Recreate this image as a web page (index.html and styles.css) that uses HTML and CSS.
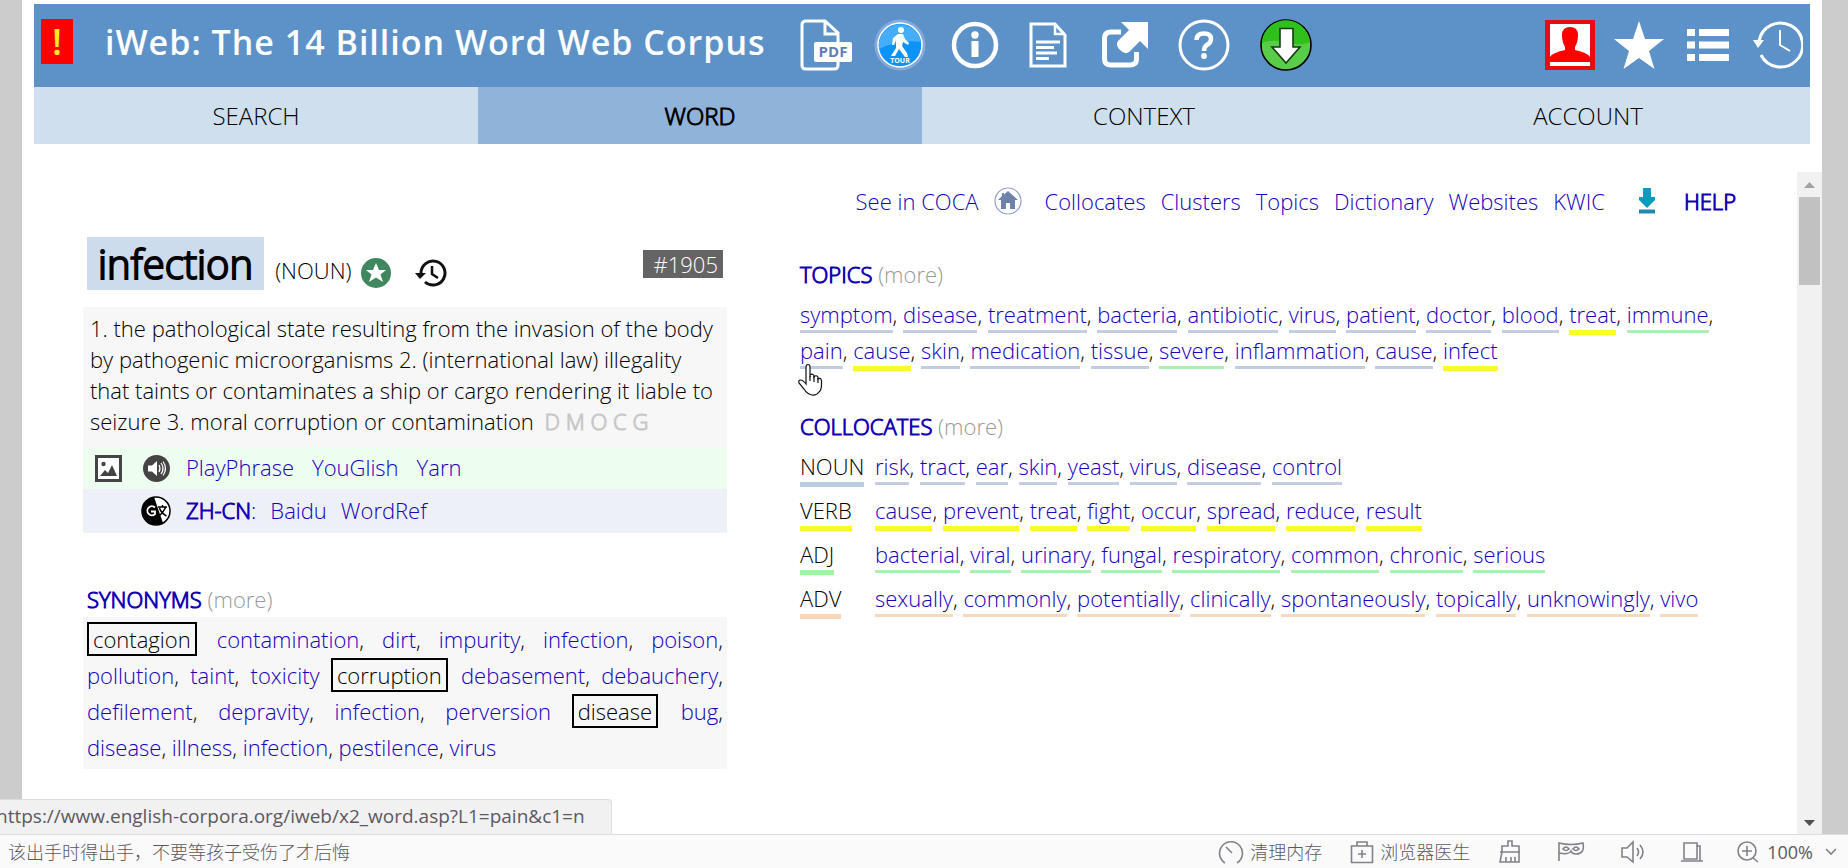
FILE: index.html
```html
<!DOCTYPE html>
<html lang="en">
<head>
<meta charset="utf-8">
<title>iWeb: The 14 Billion Word Web Corpus</title>
<link rel="stylesheet" href="styles.css">
</head>
<body>
<div class="page">
  <header class="banner">
    <a class="alert" href="#">!</a>
    <h1 class="title">iWeb: The 14 Billion Word Web Corpus</h1>
    <div class="tools">
      <a class="pdf" href="#" aria-label="PDF"><svg width="52" height="52" viewBox="0 0 52 52"><path d="M38 23V14L25 2H6Q2 2 2 6V46Q2 50 6 50H34Q38 50 38 46V43M25 2V15H38" fill="none" stroke="#fff" stroke-width="3"/><rect x="14" y="23" width="38" height="20" rx="2" fill="#fff"/><text x="33" y="38" text-anchor="middle" class="pdf-text">PDF</text></svg></a>
      <a class="tour" href="#" aria-label="Tour"><svg width="52" height="52" viewBox="0 0 52 52"><circle cx="26" cy="26" r="25.500" fill="#85aadc"/><circle cx="26" cy="26" r="22" fill="#0d92f8" stroke="#fff" stroke-width="1.500"/><path d="M5 30A21 21 0 0 1 47 23Q26 20 5 30Z" fill="#45adfa"/><circle cx="27" cy="11" r="3" fill="#fff"/><path d="M24 15L29 15L31 20L35 24L34 26L29 23L28 27L33 34L34 38H31L25 30L21 37H17L22 29L22 21L20 26H18L19 19Z" fill="#fff"/><text x="26" y="44" text-anchor="middle" class="tour-text">TOUR</text></svg></a>
      <a href="#" aria-label="Information"><svg width="48" height="48" viewBox="0 0 48 48"><circle cx="24" cy="24" r="21" fill="none" stroke="#fff" stroke-width="4.500"/><circle cx="24" cy="14" r="3.700" fill="#fff"/><rect x="20.500" y="20" width="7" height="16" fill="#fff"/></svg></a>
      <a class="doc" href="#" aria-label="Overview"><svg width="38" height="46" viewBox="0 0 38 46"><path d="M2 2H26L36 13V44H2Z" fill="none" stroke="#fff" stroke-width="3"/><path d="M26 2V12H36" fill="none" stroke="#fff" stroke-width="2.500"/><path d="M7 20H31M7 25.500H25M7 31H28M7 36.500H20" stroke="#fff" stroke-width="3"/></svg></a>
      <a href="#" aria-label="Open in new window"><svg width="46" height="46" viewBox="0 0 46 46"><path d="M19 10H9Q2.500 10 2.500 16V37Q2.500 43 9 43H28Q34.500 43 34.500 37V30" fill="none" stroke="#fff" stroke-width="5"/><path d="M19 0H46V27L38 19L27 30Q23 33 18 28Q13 23 16 19L27 8Z" fill="#fff"/></svg></a>
      <a href="#" aria-label="Help"><svg width="52" height="52" viewBox="0 0 52 52"><circle cx="26" cy="26" r="24" fill="none" stroke="#fff" stroke-width="3"/><path d="M18.500 21Q18.500 14.500 26 14.500Q33 14.500 33 20Q33 23.500 29.500 25.500Q26 27.500 26 32" fill="none" stroke="#fff" stroke-width="4.500"/><circle cx="26" cy="37" r="2.900" fill="#fff"/></svg></a>
      <a href="#" aria-label="Download"><svg width="52" height="52" viewBox="0 0 52 52"><circle cx="26" cy="26" r="25" fill="#59cc4a" stroke="#000" stroke-width="1.600"/><path d="M2 22A24.200 24.200 0 0 1 50 23Q38 28 24 23Q12 20 2 24Z" fill="#2fc01c"/><path d="M20 9.500H33V28H40L26 44L12 28H20Z" fill="#fff" stroke="#123c0e" stroke-width="1.600"/></svg></a>
    </div>
    <div class="user-tools">
      <a class="profile" href="#" aria-label="Profile"><svg width="50" height="50" viewBox="0 0 50 50"><rect width="50" height="50" fill="#e60c16"/><rect x="5" y="4" width="40" height="42" fill="#fff"/><path d="M5 42V37Q7 33 20 30V27Q17 22 17 15Q17 7 25 7Q33 7 33 15Q33 22 30 27V30Q43 33 45 37V42Z" fill="#f00"/></svg></a>
      <a href="#" aria-label="Favorites"><svg width="52" height="50" viewBox="0 0 52 50"><path d="M26 1L32 19H51L36 31L41.500 49L26 38L10.500 49L16 31L1 19H20Z" fill="#fff"/></svg></a>
      <a class="lists" href="#" aria-label="Lists"><svg width="42" height="34" viewBox="0 0 42 34"><path d="M0 1H8V8H0ZM12 1H42V8H12ZM0 13.500H8V20.500H0ZM12 13.500H42V20.500H12ZM0 26H8V33H0ZM12 26H42V33H12Z" fill="#fff"/></svg></a>
      <a href="#" aria-label="History"><svg width="50" height="48" viewBox="0 0 50 48"><path d="M6 20A22 22 0 1 1 8 34" fill="none" stroke="#fff" stroke-width="3"/><path d="M0 19H11L5 27Z" fill="#fff"/><path d="M27 9V24L37 30" fill="none" stroke="#fff" stroke-width="2"/></svg></a>
    </div>
  </header>
  <nav class="tabs">
    <a href="#">SEARCH</a>
    <a href="#" class="current">WORD</a>
    <a href="#">CONTEXT</a>
    <a href="#">ACCOUNT</a>
  </nav>
  <div class="viewport">
    <main class="content">
      <nav class="links">
        <a href="#">See in COCA</a>
        <a class="home" href="#" aria-label="Home"><svg width="28" height="28" viewBox="0 0 28 28"><circle cx="14" cy="14" r="13" fill="none" stroke="#93a0c6" stroke-width="1.200"/><path d="M14 4L24 13H21V22H16V16H12V22H7V13H4L8 9V6H10V7.500Z" fill="#6f82aa"/></svg></a>
        <a href="#">Collocates</a>
        <a href="#">Clusters</a>
        <a href="#">Topics</a>
        <a href="#">Dictionary</a>
        <a href="#">Websites</a>
        <a href="#">KWIC</a>
        <a class="save" href="#" aria-label="Save"><svg width="18" height="28" viewBox="0 0 18 28"><path d="M5 1H13V10H17V13L9 21L1 13V10H5Z" fill="#0d9abf"/><path d="M1 22.500H17V26.500H1Z" fill="#2388ae"/></svg></a>
        <a class="strong" href="#">HELP</a>
      </nav>
      <div class="columns">
        <div class="left">
          <div class="headword">
            <h2 class="word">infection</h2>
            <span class="pos">(NOUN)</span>
            <a href="#" aria-label="Add to favorites"><svg width="30" height="30" viewBox="0 0 30 30"><circle cx="15" cy="15" r="15" fill="#40875f"/><path d="M15 5L18 12H25L19.500 16.500L22 24L15 19.500L8 24L10.500 16.500L5 12H12Z" fill="#fff"/></svg></a>
            <a class="recent" href="#" aria-label="Word history"><svg width="32" height="28" viewBox="0 0 32 28"><path d="M6 14A12 12 0 1 1 10 23" fill="none" stroke="#111" stroke-width="3"/><path d="M0 14H11L5 20Z" fill="#111"/><path d="M17 7V15L23 19" fill="none" stroke="#111" stroke-width="2.500"/></svg></a>
            <span class="rank">#1905</span>
          </div>
          <p class="definition">1. the pathological state resulting from the invasion of the body by pathogenic microorganisms 2. (international law) illegality that taints or contaminates a ship or cargo rendering it liable to seizure 3. moral corruption or contamination <span class="sources">D M O C G</span></p>
          <div class="media">
            <a href="#" aria-label="Images"><svg width="27" height="27" viewBox="0 0 27 27"><rect x="1.500" y="1.500" width="24" height="24" fill="#fff" stroke="#444" stroke-width="3"/><circle cx="8.500" cy="9" r="2.200" fill="#444"/><path d="M5 21L10 15L13 18L17 10L22 21Z" fill="#444"/></svg></a>
            <a href="#" aria-label="Sound"><svg width="27" height="27" viewBox="0 0 27 27"><circle cx="13.500" cy="13.500" r="13.500" fill="#444"/><path d="M5 10.500H9L14 6V21L9 16.500H5Z" fill="#fff"/><path d="M16 10Q18 13.500 16 17M18 8Q22 13.500 18 19M20 6.500Q25 13.500 20 20.500" fill="none" stroke="#fff" stroke-width="1.200"/></svg></a>
            <span class="names"><a href="#">PlayPhrase</a><a href="#">YouGlish</a><a href="#">Yarn</a></span>
          </div>
          <div class="media translate">
            <span></span>
            <a href="#" aria-label="Translate"><svg width="30" height="30" viewBox="0 0 30 30"><circle cx="15" cy="15" r="14" fill="#fff" stroke="#000" stroke-width="1.500"/><path d="M13 1A14 14 0 1 0 22 27Z" fill="#000"/><path d="M14 11.500A4.500 4.500 0 1 0 14 18V15.500H10" fill="none" stroke="#fff" stroke-width="1.800"/><path d="M17 11H26M21.500 9V11M24.500 11Q23 16 18 20M18.500 12Q20 17 25.500 20" fill="none" stroke="#000" stroke-width="1.500"/></svg></a>
            <span class="names"><a href="#"><b>ZH-CN</b>:</a><a href="#">Baidu</a><a href="#">WordRef</a></span>
          </div>
          <section class="synonyms">
            <h3><a href="#">SYNONYMS</a> <a class="more" href="#">(more)</a></h3>
            <p><span class="sense">contagion</span> <a href="#">contamination</a>, <a href="#">dirt</a>, <a href="#">impurity</a>, <a href="#">infection</a>, <a href="#">poison</a>, <a href="#">pollution</a>, <a href="#">taint</a>, <a href="#">toxicity</a> <span class="sense">corruption</span> <a href="#">debasement</a>, <a href="#">debauchery</a>, <a href="#">defilement</a>, <a href="#">depravity</a>, <a href="#">infection</a>, <a href="#">perversion</a> <span class="sense">disease</span> <a href="#">bug</a>, <a href="#">disease</a>, <a href="#">illness</a>, <a href="#">infection</a>, <a href="#">pestilence</a>, <a href="#">virus</a></p>
          </section>
        </div>
        <div class="right">
          <section class="topics">
            <h3><a href="#">TOPICS</a> <a class="more" href="#">(more)</a></h3>
            <p class="n"><a href="#">symptom</a>, <a href="#">disease</a>, <a href="#">treatment</a>, <a href="#">bacteria</a>, <a href="#">antibiotic</a>, <a href="#">virus</a>, <a href="#">patient</a>, <a href="#">doctor</a>, <a href="#">blood</a>, <a class="v" href="#">treat</a>, <a class="j" href="#">immune</a>, <span class="hovered"><a href="#">pain</a><svg class="pointer" width="26" height="34" viewBox="0 0 26 34"><path d="M9 18V4Q9 1.500 11 1.500Q13 1.500 13 4V14V12Q15 10 17 12.500V14Q19 11.500 21 14V16Q24 14 24.500 18V22Q24.500 27 22 29Q19 33 15 32Q10 31 7 26L2 20Q1 17 3.500 17Q6 17 9 21Z" fill="#fff" stroke="#111" stroke-width="1.200"/><path d="M13 13V18M17 13V19M21 15V20" stroke="#111" stroke-width="1.200"/></svg></span>, <a class="v" href="#">cause</a>, <a href="#">skin</a>, <a href="#">medication</a>, <a href="#">tissue</a>, <a class="j" href="#">severe</a>, <a href="#">inflammation</a>, <a href="#">cause</a>, <a class="v" href="#">infect</a></p>
          </section>
          <section class="collocates">
            <h3><a href="#">COLLOCATES</a> <a class="more" href="#">(more)</a></h3>
            <table>
              <tr class="nouns"><th scope="row"><span>NOUN</span></th><td><a href="#">risk</a>, <a href="#">tract</a>, <a href="#">ear</a>, <a href="#">skin</a>, <a href="#">yeast</a>, <a href="#">virus</a>, <a href="#">disease</a>, <a href="#">control</a></td></tr>
              <tr class="verbs"><th scope="row"><span>VERB</span></th><td><a href="#">cause</a>, <a href="#">prevent</a>, <a href="#">treat</a>, <a href="#">fight</a>, <a href="#">occur</a>, <a href="#">spread</a>, <a href="#">reduce</a>, <a href="#">result</a></td></tr>
              <tr class="adjs"><th scope="row"><span>ADJ</span></th><td><a href="#">bacterial</a>, <a href="#">viral</a>, <a href="#">urinary</a>, <a href="#">fungal</a>, <a href="#">respiratory</a>, <a href="#">common</a>, <a href="#">chronic</a>, <a href="#">serious</a></td></tr>
              <tr class="advs"><th scope="row"><span>ADV</span></th><td><a href="#">sexually</a>, <a href="#">commonly</a>, <a href="#">potentially</a>, <a href="#">clinically</a>, <a href="#">spontaneously</a>, <a href="#">topically</a>, <a href="#">unknowingly</a>, <a href="#">vivo</a></td></tr>
            </table>
          </section>
        </div>
      </div>
    </main>
    <div class="scrollbar">
      <svg width="11" height="6" viewBox="0 0 11 6"><path d="M0 6L5.500 0L11 6Z" fill="#a3a3a3"/></svg>
      <div class="thumb"></div>
      <svg width="11" height="6" viewBox="0 0 11 6"><path d="M0 0L5.500 6L11 0Z" fill="#505050"/></svg>
    </div>
  </div>
</div>
<footer class="statusbar">
  <div class="target">https://www.english-corpora.org/iweb/x2_word.asp?L1=pain&amp;c1=n</div>
  <span class="tip">该出手时得出手，不要等孩子受伤了才后悔</span>
  <button class="clean"><svg width="26" height="26" viewBox="0 0 26 26"><path d="M7 24A11.500 11.500 0 1 1 19 24M8 8L14 14" /></svg>清理内存</button>
  <button class="doctor"><svg width="24" height="24" viewBox="0 0 24 24"><path d="M1.500 6H22.500V22.500H1.500ZM7 6V2H17V6M12 10V18M8 14H16"/></svg>浏览器医生</button>
  <button aria-label="Sweep"><svg width="22" height="24" viewBox="0 0 22 24"><path d="M3 12V6H9V1H13V6H20V12M1 12H21M3 12L1 22H20V12M7 22V17M12 22V17M16 22V17"/></svg></button>
  <button aria-label="Private mode"><svg width="28" height="22" viewBox="0 0 28 22"><path d="M2 20V2Q14 5 26 2Q28 13 19 13Q15 13 14 10Q12 14 2 12M6 8Q9 4 12 8Q9 11 6 8ZM16 8Q19 4 22 8Q19 11 16 8Z"/></svg></button>
  <button aria-label="Sound"><svg width="24" height="24" viewBox="0 0 24 24"><path d="M1 8H6L12 2V22L6 17H1ZM16 8Q19 12 16 16M19 5Q25 12 19 19"/></svg></button>
  <button aria-label="Window"><svg width="22" height="22" viewBox="0 0 22 22"><path d="M3 2H16V18H3ZM16 5H19V20M0 20H22"/></svg></button>
  <button class="zoom"><svg width="22" height="22" viewBox="0 0 22 22"><circle cx="10" cy="10" r="9"/><path d="M10 5V15M5 10H15M16 17L21 21"/></svg>100%<svg class="chevron" width="12" height="8" viewBox="0 0 12 8"><path d="M1 1L6 6L11 1"/></svg></button>
</footer>
</body>
</html>
```

FILE: styles.css
```css
* { box-sizing: border-box; }

body {
  margin: 0;
  height: 100vh;
  display: flex;
  flex-direction: column;
  overflow: hidden;
  background: #ccc;
  color: #000;
  font: 300 22px/36px "Open Sans", "Noto Sans CJK SC", sans-serif;
}

svg { display: block; flex: none; }
h1, h2, h3, p { margin: 0; font-weight: inherit; font-size: inherit; }
a { color: #1600bc; text-decoration: none; }

.page {
  flex: 1;
  min-height: 0;
  margin: 0 26px 0 22px;
  padding-top: 4px;
  background: #fff;
  display: flex;
  flex-direction: column;
}

.banner {
  height: 83px;
  margin: 0 12px;
  padding: 15px 7px 0;
  background: #5d92c8;
  display: flex;
  align-items: flex-start;
}
.alert {
  width: 32px;
  height: 45px;
  background: #f00;
  color: #fe2;
  font-size: 36px;
  font-weight: 600;
  line-height: 46px;
  text-align: center;
}
.title {
  margin-left: 32px;
  color: #fff;
  font-size: 34px;
  font-weight: 600;
  letter-spacing: 1px;
  line-height: 46px;
  white-space: nowrap;
}
.tools, .user-tools { display: flex; align-items: center; height: 52px; }
.tools { gap: 30px; margin-left: 34px; }
.tools .pdf { margin-right: -8px; }
.tools .tour { margin-right: -5px; }
.tools .doc { margin-right: 5px; }
.user-tools { gap: 22px; margin-left: auto; }
.user-tools .profile { margin-right: -4px; }
.user-tools .lists { margin-right: 2px; }
.pdf-text { font: 700 15px "Open Sans", sans-serif; fill: #5d80b4; }
.tour-text { font: 700 7px "Open Sans", sans-serif; fill: #fff; }

.tabs { display: flex; margin: 0 12px; }
.tabs a {
  flex: 1;
  background: #d0dfee;
  color: #000;
  font-size: 24px;
  line-height: 57px;
  text-align: center;
}
.tabs .current { background: #90b3da; -webkit-text-stroke: 1px; }

.viewport { flex: 1; min-height: 0; display: flex; margin-top: 28px; }
.content { flex: 1; min-width: 0; padding: 11px 57px 0 61px; overflow: hidden; }

.links { display: flex; justify-content: flex-end; align-items: center; gap: 15px; padding-right: 4px; }
.links .home { margin-right: 8px; }
.links .save { margin: 0 13px 0 18px; }
.strong, h3 a, b { color: #1200b4; -webkit-text-stroke: 1px; font-weight: 300; }

.columns { display: grid; grid-template-columns: 644fr 940fr; gap: 73px; margin-top: 18px; }

.headword { display: flex; align-items: center; height: 53px; padding: 0 4px; }
.word {
  padding: 0 11px;
  background: #cddcec;
  color: #000;
  font-size: 40px;
  line-height: 53px;
  -webkit-text-stroke: 2px;
}
.pos { margin: 12px 10px 0 11px; }
.headword a { margin-top: 18px; }
.headword .recent { margin-left: 24px; }
.rank {
  margin: 0 0 0 auto;
  padding: 0 5px 0 11px;
  background: #646464;
  color: #fff;
  line-height: 28px;
}
.definition { margin-top: 17px; padding: 6px 7px 10px; background: #f7f7f7; line-height: 31px; }
.sources { margin-left: 5px; color: #c8c8c8; -webkit-text-stroke: 1px; }

.media {
  display: grid;
  grid-template-columns: 27px 30px 1fr;
  column-gap: 19px;
  align-items: center;
  height: 42px;
  padding-left: 12px;
  background: #edfeef;
}
.media a svg { margin: 0 auto; }
.names { display: flex; gap: 18px; margin-left: -4px; padding-bottom: 3px; }
.translate { height: 44px; background: #edf0f7; }
.translate .names { gap: 14px; }

.synonyms { margin-top: 48px; }
.synonyms h3 { padding: 0 4px; }
h3 .more { color: #999; -webkit-text-stroke: 0; }
.synonyms p { padding: 4px; background: #f7f7f7; text-align: justify; }
.sense { margin-right: 2px; padding: 0 4px; border: 2px solid #000; }

.topics { margin-top: 19px; }
.topics p { margin-top: 4px; }
.hovered { position: relative; }
.pointer { position: absolute; left: -3px; top: 28px; }
.right p a, td a { padding-bottom: 1px; border-bottom: 3px solid #c2cde0; }
.right p .v, .verbs td a { border-bottom: 5px solid #fbfb28; }
.right p .j, .adjs td a { border-color: #aeeeb0; }
.advs td a { border-color: #f8d8c0; }

.collocates { margin-top: 40px; }
table { border-collapse: collapse; margin-top: 4px; }
th, td { height: 44px; padding: 0 0 8px; font-weight: 300; text-align: left; }
th { width: 75px; }
th span { padding-bottom: 1px; border-bottom: 5px solid #bccce2; }
.verbs th span { border-color: #fbfb28; }
.adjs th span { border-color: #a3f3a3; }
.advs th span { border-color: #fad5b8; }

.scrollbar {
  width: 25px;
  padding: 10px 2px 8px;
  background: #f1f1f1;
  display: flex;
  flex-direction: column;
  align-items: center;
}
.thumb { width: 21px; height: 88px; margin: 9px 0 auto; background: #c1c1c1; }

.statusbar {
  position: relative;
  height: 34px;
  padding: 0 11px 0 8px;
  border-top: 1px solid #ddd;
  background: #fafafa;
  color: #5c5860;
  display: flex;
  align-items: center;
  gap: 36px;
  font-size: 18px;
  line-height: 32px;
}
.tip { margin-right: auto; }
.target {
  position: absolute;
  left: 0;
  bottom: 33px;
  height: 36px;
  padding-right: 26px;
  border: 1px solid #ddd;
  border-left: 0;
  border-radius: 0 4px 0 0;
  background: #f2f1f2;
  font-size: 19px;
  font-weight: 400;
  line-height: 32px;
  text-indent: -4px;
  white-space: nowrap;
}
.statusbar button {
  display: flex;
  align-items: center;
  padding: 0;
  border: 0;
  background: none;
  color: inherit;
  font: inherit;
  gap: 6px;
}
.statusbar .clean { margin-right: -8px; }
.statusbar .doctor { margin-right: -7px; }
.statusbar svg { fill: none; stroke: #848088; stroke-width: 1.600; }
.statusbar .zoom { font-weight: 400; margin-left: -2px; gap: 8px; }
.statusbar .chevron { margin-left: 4px; }
```
